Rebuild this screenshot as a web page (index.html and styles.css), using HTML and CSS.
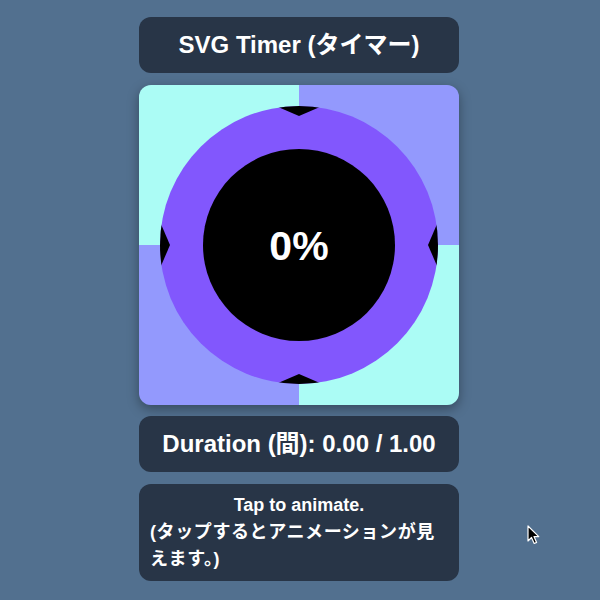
FILE: index.html
```html
<!DOCTYPE html>
<html lang="ja">
<head>
<meta charset="utf-8">
<title>SVG Timer</title>
<link rel="stylesheet" href="styles.css">
</head>
<body>
<main class="stack">
  <div class="card title">SVG Timer (タイマー)</div>
  <div class="timer">
    <svg class="timer-svg" viewBox="0 0 320 320" width="320" height="320">
      <defs>
        <clipPath id="ring-clip"><circle cx="160" cy="160" r="139"/></clipPath>
      </defs>
      <rect x="0" y="0" width="160" height="160" fill="#abfcf5"/>
      <rect x="160" y="0" width="160" height="160" fill="#9399fd"/>
      <rect x="0" y="160" width="160" height="160" fill="#9399fd"/>
      <rect x="160" y="160" width="160" height="160" fill="#abfcf5"/>
      <circle cx="160" cy="160" r="139" fill="#8257fd"/>
      <g clip-path="url(#ring-clip)" fill="#000">
        <polygon points="120,13.8 160,31 200,13.8 200,0 120,0"/>
        <polygon points="120,306.2 160,289 200,306.2 200,320 120,320"/>
        <polygon points="13.8,120 31,160 13.8,200 0,200 0,120"/>
        <polygon points="306.2,120 289,160 306.2,200 320,200 320,120"/>
      </g>
      <circle cx="160" cy="160" r="96" fill="#000"/>
      <text class="pct" x="160" y="161" text-anchor="middle" dominant-baseline="central">0%</text>
    </svg>
  </div>
  <div class="card duration">Duration (間): 0.00 / 1.00</div>
  <div class="card note">
    <div class="note-title">Tap to animate.</div>
    <div class="note-ja">(タップするとアニメーションが見えます。)</div>
  </div>
</main>
<svg class="cursor" width="14" height="20" viewBox="0 0 14 20">
  <path d="M1,1 L1,16 L4.5,12.5 L7.2,18.5 L9.6,17.4 L7,11.6 L11.8,11.6 Z" fill="#000" stroke="#fff" stroke-width="1.2" stroke-linejoin="round"/>
</svg>
</body>
</html>
```
FILE: styles.css
```css
html, body {
  margin: 0;
  padding: 0;
}
body {
  background: #52708f;
  min-height: 100vh;
  box-sizing: border-box;
  padding: 0 2px 2px 0;
  display: flex;
  align-items: center;
  justify-content: center;
  font-family: "Liberation Sans", "Noto Sans CJK JP", sans-serif;
  font-weight: bold;
  color: #fff;
  position: relative;
}
.stack {
  width: 320px;
  display: flex;
  flex-direction: column;
  gap: 11.5px;
}
.card {
  background: #283547;
  border-radius: 12px;
  box-sizing: border-box;
}
.title, .duration {
  height: 56px;
  font-size: 24px;
  line-height: 56px;
  text-align: center;
}
.timer {
  width: 320px;
  height: 320px;
  border-radius: 12px;
  overflow: hidden;
  box-shadow: 0 4px 12px rgba(0, 0, 0, 0.35);
}
.timer-svg {
  display: block;
}
.pct {
  font-family: "Liberation Sans", sans-serif;
  font-weight: bold;
  font-size: 41px;
  fill: #fff;
}
.note {
  padding: 8px 11px;
  font-size: 18px;
  line-height: 27px;
}
.note-title {
  text-align: center;
}
.note-ja {
  text-align: left;
  letter-spacing: 0.6px;
}
.cursor {
  position: absolute;
  left: 527px;
  top: 525px;
}
```
